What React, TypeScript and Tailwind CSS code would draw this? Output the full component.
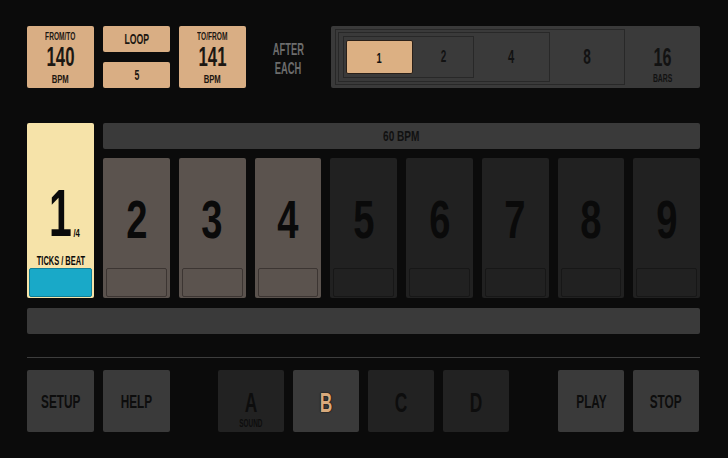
import type { ReactNode } from "react"

const font = "font-['Liberation_Sans','Arimo',sans-serif]"

// condensed text: Liberation Sans squeezed sideways to get the narrow display face
function T({ children, className = "", squeeze = "scale-x-[0.62]" }: { children: ReactNode; className?: string; squeeze?: string }) {
  return <span className={`inline-block origin-center whitespace-nowrap font-bold ${squeeze} ${className}`}>{children}</span>
}

function TanBox({ children, className = "" }: { children: ReactNode; className?: string }) {
  return (
    <div className={`flex w-[67px] flex-col items-center rounded-[2px] bg-[#d9ae84] text-[#1c1712] ${className}`}>
      {children}
    </div>
  )
}

function BpmBox({ top, value }: { top: string; value: string }) {
  return (
    <TanBox className="h-[62px] pt-[5px]">
      <T className="text-[11px] leading-[11px]" squeeze="scale-x-[0.6]">{top}</T>
      <T className="mt-[2px] text-[27px] leading-[27px]">{value}</T>
      <T className="mt-[3px] text-[11px] leading-[11px]" squeeze="scale-x-[0.7]">BPM</T>
    </TanBox>
  )
}

function BarsSelector() {
  return (
    <div className="flex h-[62px] w-[369px] items-center rounded-[2px] bg-[#3a3a3a] pl-[4px] text-[#121212]">
      {/* 8 bars */}
      <div className="flex h-[56px] w-[290px] items-center border border-[#282828] pl-[2px]">
        {/* 4 bars */}
        <div className="flex h-[50px] w-[212px] items-center border border-[#282828] pl-[4px]">
          {/* 2 bars */}
          <div className="flex h-[42px] w-[131px] items-center border border-[#282828] pl-[2px]">
            <div className="flex h-[34px] w-[67px] items-center justify-center rounded-[2px] border border-[#2a2019] bg-[#dcb083]">
              <T className="text-[15px] leading-[15px]">1</T>
            </div>
            <div className="flex flex-1 items-center justify-center">
              <T className="text-[16px] leading-[16px]">2</T>
            </div>
          </div>
          <div className="flex flex-1 items-center justify-center">
            <T className="text-[18px] leading-[18px]">4</T>
          </div>
        </div>
        <div className="flex flex-1 items-center justify-center">
          <T className="text-[22px] leading-[22px]">8</T>
        </div>
      </div>
      <div className="flex h-full flex-1 flex-col items-center pt-[18px]">
        <T className="text-[26px] leading-[26px]">16</T>
        <T className="mt-[3px] text-[11px] leading-[11px]">BARS</T>
      </div>
    </div>
  )
}

const beats = [
  { n: "2", on: true },
  { n: "3", on: true },
  { n: "4", on: true },
  { n: "5", on: false },
  { n: "6", on: false },
  { n: "7", on: false },
  { n: "8", on: false },
  { n: "9", on: false },
]

function BeatTile({ n, on }: { n: string; on: boolean }) {
  return (
    <div className={`flex h-[140px] flex-1 flex-col rounded-[2px] px-[3px] pb-[1px] ${on ? "bg-[#5b534e]" : "bg-[#212121]"}`}>
      <div className="flex flex-1 items-center justify-center pt-[12px] text-[#0a0a0a]">
        <T className="text-[53px] leading-[53px]" squeeze="scale-x-[0.72]">{n}</T>
      </div>
      <div className={`h-[29px] rounded-[2px] border ${on ? "border-[#3c3532] bg-[#5b534e]" : "border-[#171717] bg-[#212121]"}`} />
    </div>
  )
}

function BottomButton({ label, sub, dark = false, active = false, big = false, w = "w-[66px]" }: { label: string; sub?: string; dark?: boolean; active?: boolean; big?: boolean; w?: string }) {
  return (
    <div className={`flex h-[62px] ${w} flex-col items-center rounded-[2px] ${big ? "pt-[19px]" : "justify-center"} ${dark ? "bg-[#222222]" : "bg-[#3a3a3a]"}`}>
      <T
        className={`${big ? "text-[28px] leading-[28px]" : "text-[19px] leading-[19px]"} ${active ? "text-[#d8aa7c] [text-shadow:0_0_2px_#000,0_0_1px_#000]" : "text-[#0d0d0d]"}`}
      >
        {label}
      </T>
      {sub && <T className="mt-[1px] text-[11px] leading-[11px] text-[#0d0d0d]" squeeze="scale-x-[0.58]">{sub}</T>}
    </div>
  )
}

export default function App() {
  return (
    <div className={`h-[458px] w-[728px] overflow-hidden bg-[#0b0b0b] pl-[27px] pt-[26px] ${font}`}>
      <div className="w-[673px]">
        {/* top row */}
        <div className="flex gap-[9px]">
          <BpmBox top="FROM/TO" value="140" />
          <div className="flex w-[67px] flex-col gap-[10px]">
            <TanBox className="h-[26px] justify-center">
              <T className="text-[14px] leading-[14px]">LOOP</T>
            </TanBox>
            <TanBox className="h-[26px] justify-center">
              <T className="text-[14px] leading-[14px]">5</T>
            </TanBox>
          </div>
          <BpmBox top="TO/FROM" value="141" />
          <div className="flex w-[67px] flex-col items-center justify-center pt-[4px] text-[#6c6c6c]">
            <T className="text-[17px] leading-[19px]" squeeze="scale-x-[0.55]">AFTER</T>
            <T className="text-[17px] leading-[19px]" squeeze="scale-x-[0.55]">EACH</T>
          </div>
          <BarsSelector />
        </div>

        {/* beats */}
        <div className="mt-[35px] flex gap-[9px]">
          <div className="flex h-[175px] w-[67px] flex-col rounded-[2px] bg-[#f6e3a9] px-[2px] pb-[1px] text-[#0a0a0a]">
            <div className="relative flex flex-1 items-end justify-center pb-[9px]">
              <T className="text-[66px] leading-[66px]" squeeze="scale-x-[0.62]">1</T>
              <T className="absolute bottom-[16px] left-[43px] text-[11px] leading-[11px]" squeeze="scale-x-[0.7]">/4</T>
            </div>
            <div className="flex justify-center">
              <T className="text-[12px] leading-[13px]">TICKS / BEAT</T>
            </div>
            <div className="h-[29px] rounded-[2px] border border-[#0f7f98] bg-[#19a9c8]" />
          </div>
          <div className="flex flex-1 flex-col gap-[9px]">
            <div className="flex h-[26px] items-center justify-center rounded-[2px] bg-[#3a3a3a] text-[#111]">
              <T className="text-[14px] leading-[14px]" squeeze="scale-x-[0.72]">60 BPM</T>
            </div>
            <div className="flex gap-[9px]">
              {beats.map((b) => (
                <BeatTile key={b.n} n={b.n} on={b.on} />
              ))}
            </div>
          </div>
        </div>

        <div className="mt-[10px] h-[26px] rounded-[2px] bg-[#3a3a3a]" />

        <div className="mt-[23px] h-px bg-[#3d3d3d]" />

        {/* bottom controls */}
        <div className="mt-[12px] flex">
          <div className="flex gap-[9px]">
            <BottomButton label="SETUP" w="w-[67px]" />
            <BottomButton label="HELP" w="w-[67px]" />
          </div>
          <div className="ml-[48px] flex gap-[9px]">
            <BottomButton label="A" sub="SOUND" dark big />
            <BottomButton label="B" active big />
            <BottomButton label="C" dark big />
            <BottomButton label="D" dark big />
          </div>
          <div className="ml-[49px] flex gap-[9px]">
            <BottomButton label="PLAY" />
            <BottomButton label="STOP" />
          </div>
        </div>
      </div>
    </div>
  )
}
